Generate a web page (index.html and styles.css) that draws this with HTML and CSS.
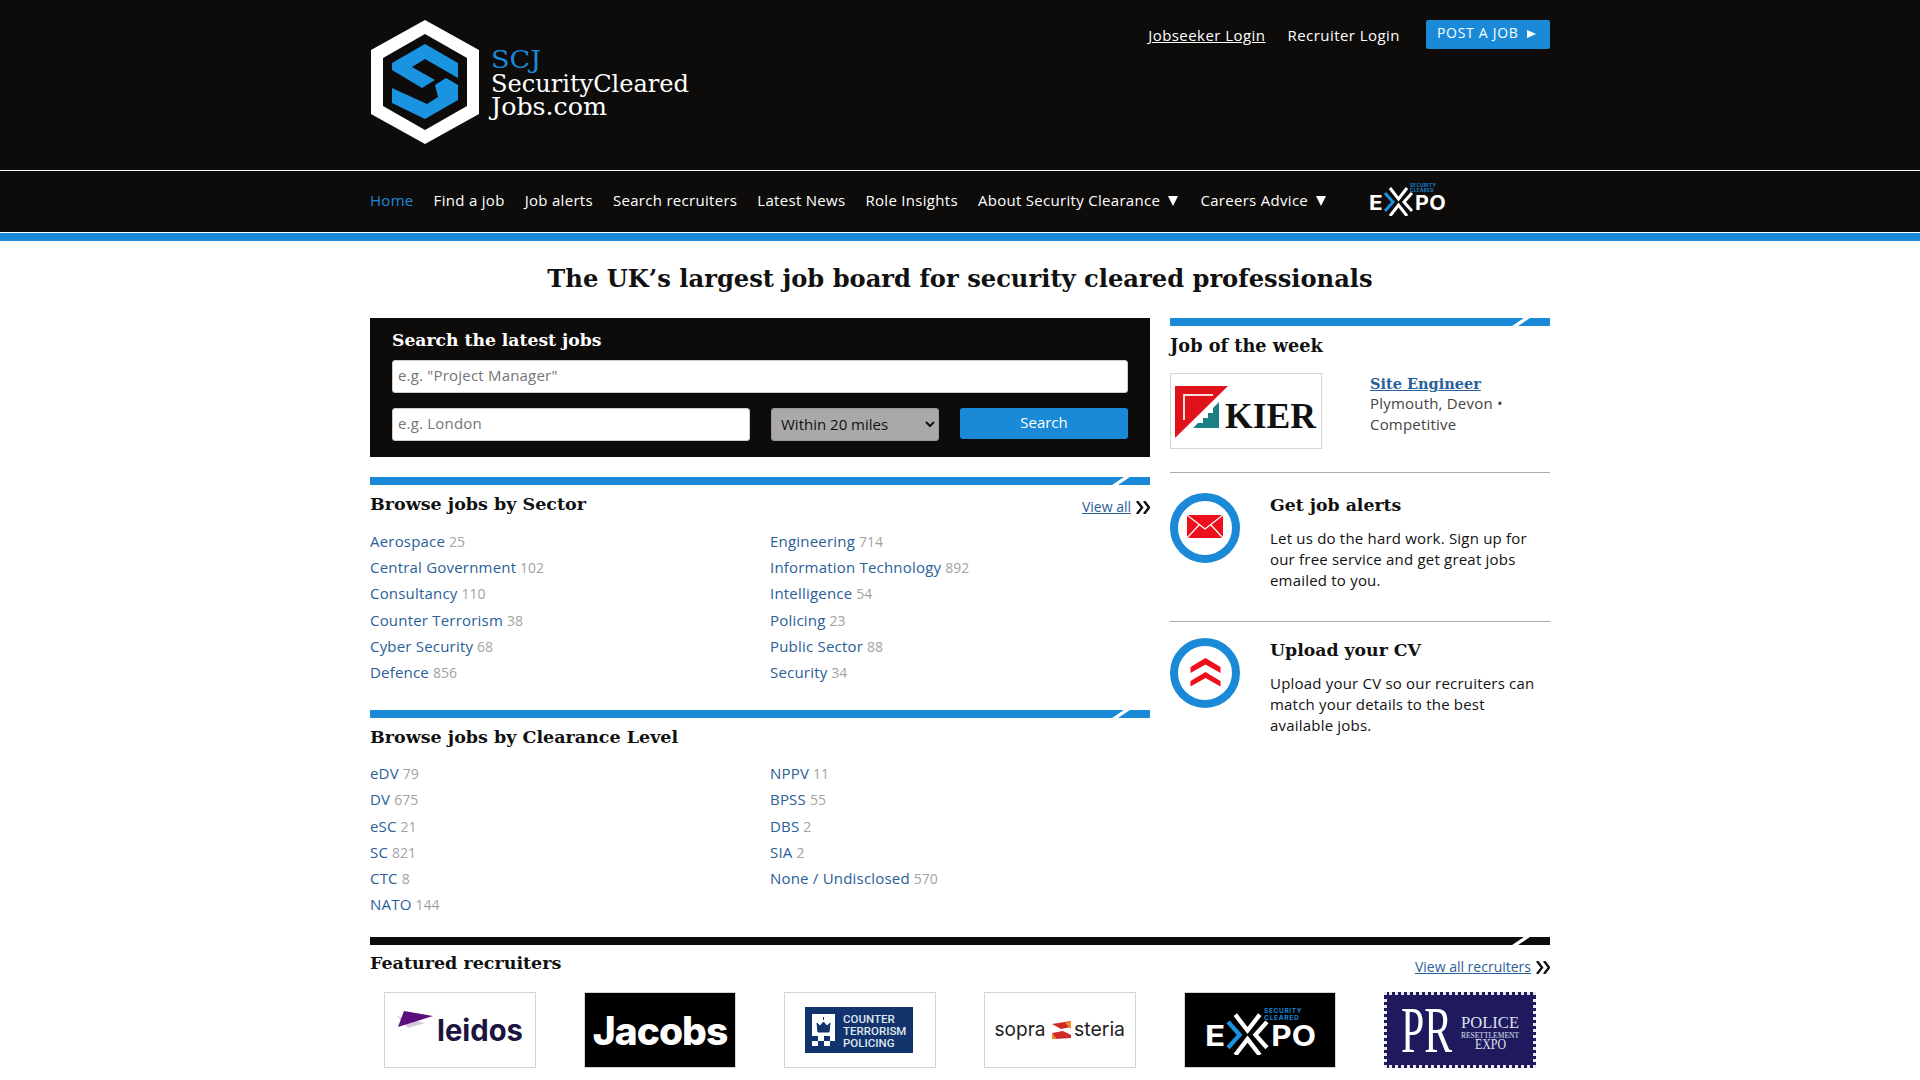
FILE: index.html
```html
<html>
  <head>
    <link rel="stylesheet" href="styles.css">
  </head>
  <body>
    <div class="top">
      <div class="wrap top-inner">
        <a class="logo" href="#">
          <svg width="330" height="124" viewBox="0 0 330 124">
            <polygon fill="#fff" points="55,0 109,30 109,94 55,124 1,94 1,30" />
            <polygon fill="#0e0c0a" points="55,14 97,38 97,86 55,110 13,86 13,38" />
            <polygon fill="#1a93e0" points="22,43 55,24 88,43 88,58 55,39 42,47 65,60 52,68 22,50" />
            <polygon fill="#1a93e0" points="22,68 57,84 68,77 65,65 76,58 88,65 88,80 55,99 22,83" />
            <text class="logo-scj" x="121" y="48" textLength="50" lengthAdjust="spacingAndGlyphs">SCJ</text>
            <text class="logo-txt" x="121" y="72" textLength="198" lengthAdjust="spacingAndGlyphs">SecurityCleared</text>
            <text class="logo-txt" x="121" y="95" textLength="116" lengthAdjust="spacingAndGlyphs">Jobs.com</text>
          </svg>
        </a>
        <div class="top-links">
          <a class="login underline" href="#">Jobseeker Login</a>
          <a class="login" href="#">Recruiter Login</a>
          <a class="post-btn" href="#">POST A JOB <span class="post-arrow"></span></a>
        </div>
      </div>
    </div>

    <div class="nav">
      <div class="wrap nav-inner">
        <a class="active" href="#">Home</a>
        <a href="#">Find a job</a>
        <a href="#">Job alerts</a>
        <a href="#">Search recruiters</a>
        <a href="#">Latest News</a>
        <a href="#">Role Insights</a>
        <a href="#">About Security Clearance <span class="caret"></span></a>
        <a href="#">Careers Advice <span class="caret"></span></a>
        <a class="nav-expo" href="#">
          <svg width="77" height="34" viewBox="0 0 77 34">
            <text class="expo-small" x="41" y="5" textLength="26">SECURITY</text>
            <text class="expo-small" x="41" y="9.500" textLength="24">CLEARED</text>
            <text class="expo-big" x="0" y="27.500" textLength="14" lengthAdjust="spacingAndGlyphs">E</text>
            <text class="expo-big" x="46" y="27.500" textLength="31" lengthAdjust="spacingAndGlyphs">PO</text>
            <path d="M16 11 L24 20 L16 29" fill="none" stroke="#1a93e0" stroke-width="3" />
            <path d="M43 11 L35 20 L43 29" fill="none" stroke="#fff" stroke-width="3" />
            <path d="M21 6 L29.500 17 L38 6" fill="none" stroke="#fff" stroke-width="3" />
            <path d="M21 34 L29.500 23 L38 34" fill="none" stroke="#fff" stroke-width="3" />
          </svg>
        </a>
      </div>
    </div>
    <div class="blue-strip"></div>

    <div class="wrap">
      <h1 class="strapline">The UK’s largest job board for security cleared professionals</h1>

      <div class="columns">
        <div class="main">
          <div class="search-box">
            <h2>Search the latest jobs</h2>
            <input class="field" type="text" placeholder='e.g. "Project Manager"' />
            <div class="search-row">
              <input class="field field-loc" type="text" placeholder="e.g. London" />
              <select class="miles">
                <option>Within 20 miles</option>
              </select>
              <button class="search-btn">Search</button>
            </div>
          </div>

          <div class="bar bar-sector"></div>
          <div class="sec-head">
            <h3>Browse jobs by Sector</h3>
            <a class="view-all" href="#"><span class="view-txt">View all</span><svg class="chev" width="14" height="13" viewBox="0 0 14 13"><path d="M1 0 L6 6.500 L1 13 M8 0 L13 6.500 L8 13" fill="none" stroke="#111" stroke-width="2.400" /></svg></a>
          </div>
          <div class="list">
            <div><a href="#">Aerospace</a> <span>25</span></div>
            <div><a href="#">Engineering</a> <span>714</span></div>
            <div><a href="#">Central Government</a> <span>102</span></div>
            <div><a href="#">Information Technology</a> <span>892</span></div>
            <div><a href="#">Consultancy</a> <span>110</span></div>
            <div><a href="#">Intelligence</a> <span>54</span></div>
            <div><a href="#">Counter Terrorism</a> <span>38</span></div>
            <div><a href="#">Policing</a> <span>23</span></div>
            <div><a href="#">Cyber Security</a> <span>68</span></div>
            <div><a href="#">Public Sector</a> <span>88</span></div>
            <div><a href="#">Defence</a> <span>856</span></div>
            <div><a href="#">Security</a> <span>34</span></div>
          </div>

          <div class="bar bar-level"></div>
          <div class="sec-head">
            <h3>Browse jobs by Clearance Level</h3>
          </div>
          <div class="list list-level">
            <div><a href="#">eDV</a> <span>79</span></div>
            <div><a href="#">NPPV</a> <span>11</span></div>
            <div><a href="#">DV</a> <span>675</span></div>
            <div><a href="#">BPSS</a> <span>55</span></div>
            <div><a href="#">eSC</a> <span>21</span></div>
            <div><a href="#">DBS</a> <span>2</span></div>
            <div><a href="#">SC</a> <span>821</span></div>
            <div><a href="#">SIA</a> <span>2</span></div>
            <div><a href="#">CTC</a> <span>8</span></div>
            <div><a href="#">None / Undisclosed</a> <span>570</span></div>
            <div><a href="#">NATO</a> <span>144</span></div>
          </div>
        </div>

        <div class="side">
          <div class="bar"></div>
          <h3 class="side-title">Job of the week</h3>
          <div class="jotw">
            <div class="logo-box kier">
              <svg width="150" height="74" viewBox="0 0 150 74">
                <polygon fill="#e0131a" points="4,12 57,12 4,64" />
                <polyline fill="none" stroke="#f6dcdc" stroke-width="2" points="13,46 13,21 42,21" />
                <polygon fill="#1b7f86" points="48,28 48,54 22,54 27,49 32,49 32,44 37,44 37,39 42,39 42,34 48,28" />
                <text class="kier-txt" x="54" y="54" textLength="91" lengthAdjust="spacingAndGlyphs">KIER</text>
              </svg>
            </div>
            <div class="jotw-info">
              <a class="jotw-link" href="#">Site Engineer</a>
              <p>Plymouth, Devon •<br>Competitive</p>
            </div>
          </div>

          <div class="promo promo-first">
            <svg class="promo-icon" width="70" height="70" viewBox="0 0 70 70">
              <circle cx="35" cy="35" r="31" fill="none" stroke="#1a8ad8" stroke-width="8" />
              <rect x="17" y="22" width="36" height="23" fill="#ee0f1c" />
              <path d="M17 22 L35 36 L53 22 M17 45 L29 32 M53 45 L41 32" fill="none" stroke="#fff" stroke-width="1.200" />
            </svg>
            <div class="promo-body">
              <h4>Get job alerts</h4>
              <p>Let us do the hard work. Sign up for our free service and get great jobs emailed to you.</p>
            </div>
          </div>

          <div class="promo">
            <svg class="promo-icon" width="70" height="70" viewBox="0 0 70 70">
              <circle cx="35" cy="35" r="31" fill="none" stroke="#1a8ad8" stroke-width="8" />
              <polygon fill="#ee0f1c" points="35.500,20 50.500,29 50.500,35 35.500,26.500 20.500,35 20.500,29" />
              <polygon fill="#ee0f1c" points="35.500,34 50.500,43 50.500,48.500 35.500,40 20.500,48.500 20.500,43" />
            </svg>
            <div class="promo-body">
              <h4>Upload your CV</h4>
              <p>Upload your CV so our recruiters can match your details to the best available jobs.</p>
            </div>
          </div>
        </div>
      </div>

      <div class="bar bar-dark"></div>
      <div class="sec-head feat-head">
        <h3>Featured recruiters</h3>
        <a class="view-all" href="#"><span class="view-txt">View all recruiters</span><svg class="chev" width="14" height="13" viewBox="0 0 14 13"><path d="M1 0 L6 6.500 L1 13 M8 0 L13 6.500 L8 13" fill="none" stroke="#111" stroke-width="2.400" /></svg></a>
      </div>
      <div class="recruiters">
        <div class="logo-box">
          <svg width="150" height="74" viewBox="0 0 150 74">
            <polygon fill="#d9c9dc" points="12,23 40,30 23,35" />
            <polygon fill="#5b0f7c" points="19,18 48,23 13,34" />
            <text class="leidos" x="52" y="48" textLength="86" lengthAdjust="spacingAndGlyphs">leidos</text>
          </svg>
        </div>
        <div class="logo-box logo-black">
          <span class="jacobs">Jacobs</span>
        </div>
        <div class="logo-box">
          <svg width="150" height="74" viewBox="0 0 150 74">
            <rect x="20" y="14" width="108" height="46" fill="#12336b" />
            <rect x="27" y="21" width="23" height="32" fill="#fff" />
            <path d="M38.500 24 L38.500 27 M32 30 L35 33 L38.500 29 L42 33 L45 30 L44 39 L33 39 Z" fill="#12336b" stroke="#12336b" />
            <rect x="27" y="43" width="6" height="5" fill="#12336b" />
            <rect x="39" y="43" width="6" height="5" fill="#12336b" />
            <rect x="33" y="48" width="6" height="5" fill="#12336b" />
            <rect x="45" y="48" width="5" height="5" fill="#12336b" />
            <text class="ctp" x="58" y="30">COUNTER</text>
            <text class="ctp" x="58" y="42">TERRORISM</text>
            <text class="ctp" x="58" y="53.500">POLICING</text>
          </svg>
        </div>
        <div class="logo-box">
          <svg width="150" height="74" viewBox="0 0 150 74">
            <text class="sopra" x="9.500" y="43" textLength="51" lengthAdjust="spacingAndGlyphs">sopra</text>
            <path d="M67 31 L86 28 L86 34 L76 36 Z" fill="#cf2a2a" />
            <path d="M67 40 L78 38 L86 42 L86 45 L70 46 Z" fill="#cf2a2a" />
            <path d="M80 30 L86 28 L86 36 Z M67 40 L72 46 L67 46 Z" fill="#ef8b22" />
            <text class="sopra" x="89" y="43" textLength="51" lengthAdjust="spacingAndGlyphs">steria</text>
          </svg>
        </div>
        <div class="logo-box logo-black">
          <svg width="111" height="49" viewBox="0 0 77 34">
            <text class="expo-small" x="41" y="5" textLength="26">SECURITY</text>
            <text class="expo-small" x="41" y="9.500" textLength="24">CLEARED</text>
            <text class="expo-big" x="0" y="27.500" textLength="14" lengthAdjust="spacingAndGlyphs">E</text>
            <text class="expo-big" x="46" y="27.500" textLength="31" lengthAdjust="spacingAndGlyphs">PO</text>
            <path d="M16 11 L24 20 L16 29" fill="none" stroke="#1a93e0" stroke-width="3" />
            <path d="M43 11 L35 20 L43 29" fill="none" stroke="#fff" stroke-width="3" />
            <path d="M21 6 L29.500 17 L38 6" fill="none" stroke="#fff" stroke-width="3" />
            <path d="M21 34 L29.500 23 L38 34" fill="none" stroke="#fff" stroke-width="3" />
          </svg>
        </div>
        <div class="logo-box logo-pr">
          <svg width="146" height="70" viewBox="0 0 146 70">
            <text class="pr-big" x="14" y="57" textLength="51" lengthAdjust="spacingAndGlyphs">PR</text>
            <text class="pr-small" x="74" y="33" font-size="17" textLength="58" lengthAdjust="spacingAndGlyphs">POLICE</text>
            <text class="pr-small" x="74" y="43" font-size="8" textLength="58" lengthAdjust="spacingAndGlyphs">RESETTLEMENT</text>
            <text class="pr-small" x="88" y="54" font-size="14" textLength="31" lengthAdjust="spacingAndGlyphs">EXPO</text>
          </svg>
        </div>
      </div>
    </div>
  </body>
</html>
```

FILE: styles.css
```css
* {
  box-sizing: border-box;
}

body {
  margin: 0;
  background: white;
  color: #111;
  font-family: "Open Sans", "Noto Sans", sans-serif;
  font-size: 15px;
}

a {
  text-decoration: none;
}

.wrap {
  width: 1180px;
  margin: 0 auto;
}

/* top black header */
.top {
  height: 171px;
  background: #0e0c0a;
  border-bottom: 1px solid white;
}

.top-inner {
  display: flex;
  justify-content: space-between;
  align-items: flex-start;
  padding-top: 20px;
}

.logo {
  display: block;
  height: 124px;
}

.logo-scj {
  font-family: "DejaVu Serif", serif;
  font-size: 25px;
  fill: #1a8ad8;
}

.logo-txt {
  font-family: "DejaVu Serif", serif;
  font-size: 24px;
  fill: white;
}

.top-links {
  display: flex;
  align-items: center;
}

.login {
  color: white;
  font-size: 15px;
  letter-spacing: 0.45px;
  margin-right: 22px;
}

.underline {
  text-decoration: underline;
}

.post-btn {
  display: block;
  width: 124px;
  height: 29px;
  margin-left: 4px;
  padding: 3px 0 0 11px;
  background: #1a8ad8;
  border-radius: 2px;
  color: white;
  font-size: 14px;
  letter-spacing: 0.7px;
  white-space: nowrap;
}

.post-arrow {
  display: inline-block;
  margin-left: 4px;
  border-left: 9px solid white;
  border-top: 4.5px solid transparent;
  border-bottom: 4.5px solid transparent;
}

/* nav */
.nav {
  height: 62px;
  background: #0e0c0a;
  border-bottom: 1px solid white;
}

.nav-inner {
  display: flex;
  align-items: center;
  height: 61px;
  padding-bottom: 4px;
  gap: 20px;
}

.nav-inner a {
  color: white;
  font-size: 15px;
  letter-spacing: 0.3px;
  white-space: nowrap;
}

.nav-inner a.active {
  color: #1a8ad8;
}

.caret {
  display: inline-block;
  margin-left: 4px;
  margin-right: 2px;
  border-top: 10px solid white;
  border-left: 5.5px solid transparent;
  border-right: 5.5px solid transparent;
}

.nav-inner a.nav-expo {
  display: block;
  height: 34px;
  margin-left: 21px;
  margin-bottom: 2px;
}

.blue-strip {
  height: 8px;
  background: #1a8ad8;
}

.strapline {
  margin: 0;
  padding-top: 20px;
  height: 77px;
  font-family: "DejaVu Serif", serif;
  font-size: 24.2px;
  line-height: 36px;
  font-weight: bold;
  text-align: center;
  color: #111;
}

.columns {
  display: flex;
  justify-content: space-between;
  height: 619px;
}

.main {
  width: 780px;
}

.side {
  width: 380px;
}

/* search */
.search-box {
  height: 139px;
  padding: 10px 22px 0;
  background: #0e0c0a;
}

.search-box h2 {
  margin: 0 0 8px;
  font-family: "DejaVu Serif", serif;
  font-size: 17.2px;
  line-height: 24px;
  font-weight: bold;
  color: white;
}

.field {
  display: block;
  width: 736px;
  height: 33px;
  padding: 0 5px 3px;
  border: 1px solid #ccc;
  border-radius: 3px;
  background: white;
  font-family: inherit;
  font-size: 15px;
  letter-spacing: 0.2px;
}

.search-row {
  display: flex;
  justify-content: space-between;
  margin-top: 15px;
}

.field-loc {
  width: 358px;
}

.miles {
  width: 168px;
  height: 33px;
  padding-left: 5px;
  padding-bottom: 2px;
  border: 1px solid #999;
  border-radius: 3px;
  background: #a9a9a9;
  color: #111;
  font-family: inherit;
  font-size: 15px;
}

.search-btn {
  width: 168px;
  height: 31px;
  padding-bottom: 4px;
  border: none;
  border-radius: 3px;
  background: #1a8ad8;
  color: white;
  font-family: inherit;
  font-size: 15px;
}

/* section bars */
.bar {
  position: relative;
  height: 8px;
  background: #1a8ad8;
}

.bar::after {
  content: "";
  position: absolute;
  top: 0;
  right: 26px;
  width: 6px;
  height: 8px;
  background: white;
  transform: skewX(-56deg);
}

.bar-sector {
  margin-top: 20px;
}

.bar-level {
  margin-top: 25px;
}

.bar-dark {
  background: #0e0c0a;
}

.sec-head {
  display: flex;
  justify-content: space-between;
  align-items: flex-start;
  height: 36px;
  padding-top: 4px;
}

.sec-head h3 {
  margin: 0;
  font-family: "DejaVu Serif", serif;
  font-size: 17.5px;
  line-height: 30px;
  font-weight: bold;
}

.view-all {
  margin-top: 8px;
  color: #2a6099;
  font-size: 14px;
  line-height: 20px;
}

.view-txt {
  text-decoration: underline;
}

.chev {
  margin-left: 5px;
  vertical-align: -2px;
}

/* lists of links */
.list {
  display: grid;
  grid-template-columns: 400px 1fr;
  grid-auto-rows: 26.2px;
  margin-top: 7px;
  line-height: 26.2px;
}

.list-level {
  margin-top: 6px;
}

.list a {
  color: #2a6099;
  font-size: 15px;
  letter-spacing: 0.2px;
}

.list span {
  color: #a3a3a3;
  font-size: 14px;
}

/* right column */
.side-title {
  margin: 5px 0 12px;
  font-family: "DejaVu Serif", serif;
  font-size: 17.7px;
  line-height: 30px;
  font-weight: bold;
}

.jotw {
  display: flex;
  padding-bottom: 23px;
  border-bottom: 1px solid #aaa;
}

.jotw-info {
  margin-left: 48px;
}

.jotw-link {
  display: block;
  margin-top: 1px;
  color: #2a6099;
  font-family: "DejaVu Serif", serif;
  font-size: 14.5px;
  line-height: 19px;
  font-weight: bold;
  text-decoration: underline;
}

.jotw-info p {
  margin: 0;
  color: #444;
  letter-spacing: 0.2px;
  line-height: 21px;
}

.promo {
  display: flex;
  padding-top: 16px;
  height: 146px;
}

.promo-first {
  height: 149px;
  padding-top: 20px;
  border-bottom: 1px solid #aaa;
}

.promo-icon {
  flex: none;
}

.promo-body {
  width: 270px;
  margin-left: 30px;
}

.promo-body h4 {
  margin: 0 0 11px;
  font-family: "DejaVu Serif", serif;
  font-size: 17.3px;
  line-height: 24px;
  font-weight: bold;
}

.promo-body p {
  margin: 0;
  letter-spacing: 0.2px;
  line-height: 21px;
}

/* recruiter logos */
.feat-head {
  height: 30px;
}

.feat-head h3 {
  line-height: 28px;
}

.recruiters {
  display: flex;
  justify-content: space-between;
  margin-top: 17px;
  padding: 0 14px;
}

.logo-box {
  display: flex;
  align-items: center;
  justify-content: center;
  flex: none;
  width: 152px;
  height: 76px;
  border: 1px solid #d5d5d5;
  background: white;
}

.logo-black {
  background: black;
}

.logo-pr {
  border: 3px dotted #e8e8e8;
  background: #1f1a5e;
}

.kier-txt {
  font-family: "Liberation Serif", serif;
  font-size: 36px;
  font-weight: bold;
  fill: #111;
}

.leidos {
  font-family: "Inter", sans-serif;
  font-size: 30px;
  font-weight: bold;
  fill: #1c1440;
}

.jacobs {
  color: white;
  font-family: "Inter", sans-serif;
  font-size: 39px;
  font-weight: 800;
  letter-spacing: -1px;
}

.ctp {
  font-family: "Roboto", sans-serif;
  font-size: 11.5px;
  font-weight: 500;
  fill: #dfe6f2;
}

.sopra {
  font-family: "Inter", sans-serif;
  font-size: 20px;
  font-weight: 400;
  fill: #222;
}

.expo-small {
  font-family: "Inter", sans-serif;
  font-size: 4.5px;
  font-weight: bold;
  fill: #1a8ad8;
}

.expo-big {
  font-family: "Inter", sans-serif;
  font-size: 19.5px;
  font-weight: bold;
  fill: white;
}

.pr-big {
  font-family: "Liberation Serif", serif;
  font-size: 65px;
  fill: white;
}

.pr-small {
  font-family: "Liberation Serif", serif;
  fill: #dfe0f0;
}
```
